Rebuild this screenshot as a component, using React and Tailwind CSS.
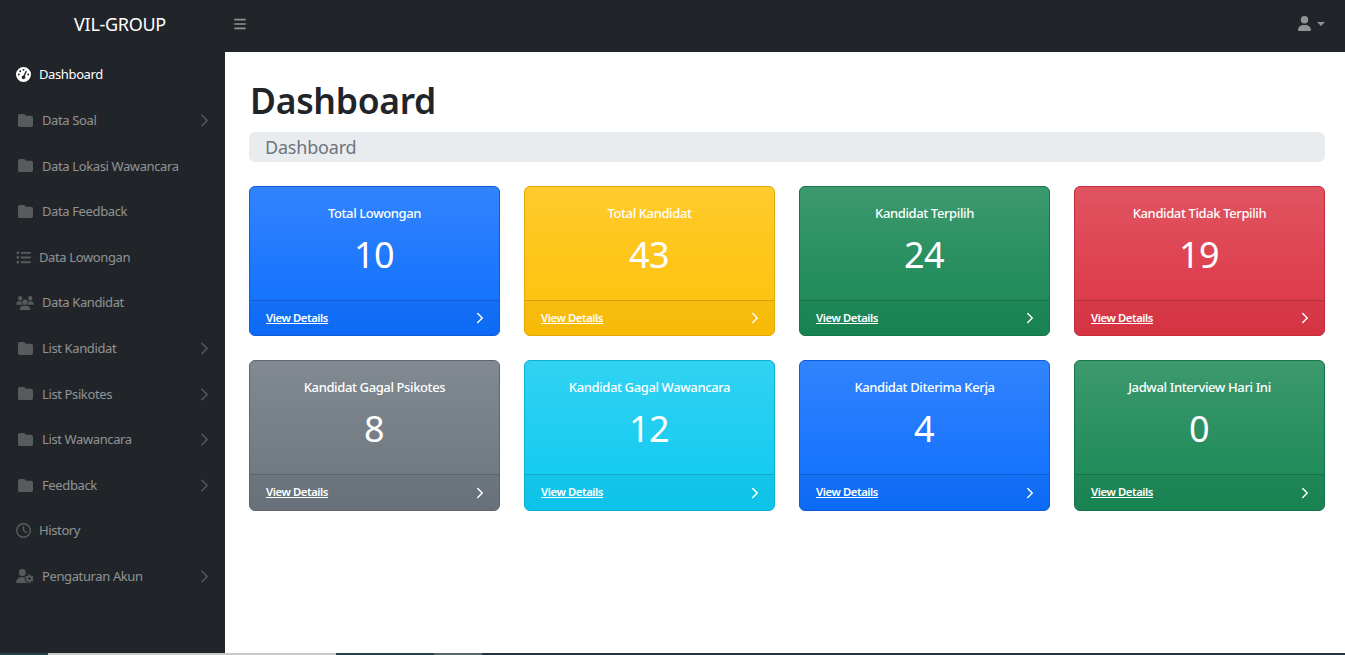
import React from "react";
import { ChevronRight } from "lucide-react";
import {
  FaBars,
  FaFolder,
  FaGaugeHigh,
  FaListUl,
  FaRegClock,
  FaUser,
  FaUserGear,
  FaUsers,
} from "react-icons/fa6";

const menu = [
  { label: "Dashboard", icon: FaGaugeHigh, active: true, narrow: true },
  { label: "Data Soal", icon: FaFolder, arrow: true },
  { label: "Data Lokasi Wawancara", icon: FaFolder },
  { label: "Data Feedback", icon: FaFolder },
  { label: "Data Lowongan", icon: FaListUl, narrow: true },
  { label: "Data Kandidat", icon: FaUsers, wide: true },
  { label: "List Kandidat", icon: FaFolder, arrow: true },
  { label: "List Psikotes", icon: FaFolder, arrow: true },
  { label: "List Wawancara", icon: FaFolder, arrow: true },
  { label: "Feedback", icon: FaFolder, arrow: true },
  { label: "History", icon: FaRegClock, narrow: true },
  { label: "Pengaturan Akun", icon: FaUserGear, wide: true, arrow: true },
];

const cards = [
  { title: "Total Lowongan", value: 10, bg: "bg-[#0d6efd]", border: "border-[#0b5ed7]" },
  { title: "Total Kandidat", value: 43, bg: "bg-[#ffc107]", border: "border-[#dfa906]" },
  { title: "Kandidat Terpilih", value: 24, bg: "bg-[#198754]", border: "border-[#16764a]" },
  { title: "Kandidat Tidak Terpilih", value: 19, bg: "bg-[#dc3545]", border: "border-[#c12f3d]" },
  { title: "Kandidat Gagal Psikotes", value: 8, bg: "bg-[#6c757d]", border: "border-[#5f666d]" },
  { title: "Kandidat Gagal Wawancara", value: 12, bg: "bg-[#0dcaf0]", border: "border-[#0bb1d2]" },
  { title: "Kandidat Diterima Kerja", value: 4, bg: "bg-[#0d6efd]", border: "border-[#0b5ed7]" },
  { title: "Jadwal Interview Hari Ini", value: 0, bg: "bg-[#198754]", border: "border-[#16764a]" },
];

function SideItem({ item }) {
  const Icon = item.icon;
  const iconBox = item.wide ? "pl-0 w-[26px]" : item.narrow ? "w-[23px]" : "pl-[2px] w-[26px]";
  const iconSize = item.wide ? "h-[14px] w-[18px]" : "h-[15px] w-[15px]";
  return (
    <a
      className={`flex h-[45.6px] items-center pl-4 pr-[10px] text-[13px] tracking-[-0.38px] ${
        item.active ? "text-white" : "text-white/50"
      }`}
    >
      <span className={`mb-px flex ${iconBox} ${item.active ? "text-white" : "text-white/25"}`}>
        <Icon className={iconSize} />
      </span>
      <span className="flex-1">{item.label}</span>
      {item.arrow && <ChevronRight size={21} strokeWidth={1.6} className="text-white/25" />}
    </a>
  );
}

function StatCard({ card }) {
  return (
    <div className={`flex h-[150.4px] flex-col overflow-hidden rounded-[6px] border bg-gradient-to-b from-white/15 to-white/0 text-white ${card.bg} ${card.border}`}>
      <div className="flex flex-1 flex-col items-center">
        <div className="mt-[17px] text-[13px] font-medium leading-[18px] tracking-[-0.38px]">{card.title}</div>
        <div className="mt-[9px] pr-px text-[36px] leading-[48px] tracking-[-0.5px]">{card.value}</div>
      </div>
      <div className="flex h-[35.5px] items-center justify-between border-t border-black/15 bg-black/[0.03] pl-4 pr-[10px] text-[11.3px] font-semibold">
        <a className="tracking-[-0.42px] underline">View Details</a>
        <ChevronRight size={18} strokeWidth={2} />
      </div>
    </div>
  );
}

export default function App() {
  return (
    <div className="flex h-[655px] w-[1345px] flex-col overflow-hidden bg-white font-['Noto_Sans',sans-serif]">
      {/* Top navbar */}
      <header className="flex h-[52px] shrink-0 items-center bg-[#212529] pb-[3px] pr-5">
        <div className="w-[234px] pl-[6px] text-center text-[18px] tracking-[-0.3px] text-white">VIL-GROUP</div>
        <FaBars className="mb-[2px] h-[14px] w-[12px] text-white/50" />
        <div className="mb-[2px] ml-auto flex items-center gap-[6px] text-white/50">
          <FaUser className="h-[15px] w-[13px]" />
          <span className="h-0 w-0 border-x-[4px] border-t-[4px] border-x-transparent border-t-white/50" />
        </div>
      </header>

      <div className="flex min-h-0 flex-1">
        {/* Sidebar */}
        <aside className="w-[225px] shrink-0 bg-[#212529] pt-[0.4px]">
          {menu.map((item) => (
            <SideItem key={item.label} item={item} />
          ))}
        </aside>

        {/* Content */}
        <main className="min-w-0 flex-1 pl-6 pr-5">
          <h1 className="ml-px mt-[23px] text-[35.5px] font-semibold leading-[50px] tracking-[-0.3px] text-[#212529]">Dashboard</h1>
          <div className="mt-[7px] flex h-[30px] items-center rounded-[6px] bg-[#e9ecef] px-4 text-[18px] tracking-[-0.2px] text-[#6c757d]">
            Dashboard
          </div>
          <div className="mt-6 grid grid-cols-4 gap-6">
            {cards.map((card) => (
              <StatCard key={card.title} card={card} />
            ))}
          </div>
        </main>
      </div>

      {/* Strip of the desktop below the window */}
      <div className="flex h-[2px] shrink-0 bg-[#1e2d3d]">
        <div className="w-[48px] bg-[#24424a]" />
        <div className="w-[288px] bg-[#c8c8c8]" />
        <div className="w-[98px] bg-[#24424a]" />
        <div className="w-[48px] bg-[#55686a]" />
        <div className="flex-1 bg-[#1f3440]" />
      </div>
    </div>
  );
}
